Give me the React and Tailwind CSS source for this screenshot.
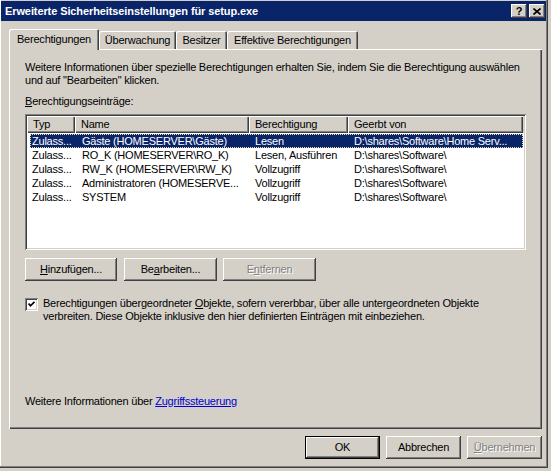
import React from "react";

const raised =
  "shadow-[inset_-1px_-1px_0_#404040,inset_1px_1px_0_#ffffff,inset_-2px_-2px_0_#808080]";
const sunken =
  "shadow-[inset_1px_1px_0_#808080,inset_-1px_-1px_0_#ffffff,inset_2px_2px_0_#404040,inset_-2px_-2px_0_#d4d0c8]";
const tabEdge =
  "shadow-[inset_1px_1px_0_#ffffff,inset_-1px_0_0_#404040,inset_-2px_0_0_#808080]";

const rows = [
  ["Zulass...", "Gäste (HOMESERVER\\Gäste)", "Lesen", "D:\\shares\\Software\\Home Serv..."],
  ["Zulass...", "RO_K (HOMESERVER\\RO_K)", "Lesen, Ausführen", "D:\\shares\\Software\\"],
  ["Zulass...", "RW_K (HOMESERVER\\RW_K)", "Vollzugriff", "D:\\shares\\Software\\"],
  ["Zulass...", "Administratoren (HOMESERVE...", "Vollzugriff", "D:\\shares\\Software\\"],
  ["Zulass...", "SYSTEM", "Vollzugriff", "D:\\shares\\Software\\"],
];

function Button({ children, className = "", disabled }) {
  return (
    <div
      className={`flex h-[23px] items-center justify-center bg-[#d4d0c8] ${raised} ${
        disabled ? "text-[#808080] [text-shadow:1px_1px_0_#ffffff]" : "text-black"
      } ${className}`}
    >
      {children}
    </div>
  );
}

function HeaderCell({ children, className = "" }) {
  return (
    <div
      className={`flex h-[17px] shrink-0 items-center pl-[6px] shadow-[inset_1px_1px_0_#ffffff,inset_-1px_-1px_0_#404040,inset_-2px_-2px_0_#808080] ${className}`}
    >
      {children}
    </div>
  );
}

export default function App() {
  return (
    <div className="h-[471px] w-[551px] overflow-hidden bg-[#d4d0c8] font-['Liberation_Sans',Arial,sans-serif] text-[11px] leading-[13px] tracking-[-0.22px] text-black">
      <div className="flex h-[468px] w-[548px] flex-col pl-[1px] pr-[2px] pt-[1px] shadow-[inset_-1px_-1px_0_#404040,inset_-2px_-2px_0_#808080,inset_1px_0_0_#ffffff]">
        {/* Title bar */}
        <div className="flex h-[20px] items-center justify-between bg-[#0a246a] pl-[4px] pr-[1px]">
          <span className="whitespace-nowrap font-bold tracking-[-0.1px] text-white">
            Erweiterte Sicherheitseinstellungen für setup.exe
          </span>
          <div className="flex gap-[2px]">
            <div className={`flex h-[14px] w-[16px] items-center justify-center bg-[#d4d0c8] ${raised}`}>
              <span className="text-[11px] font-bold leading-none text-black">?</span>
            </div>
            <div className={`flex h-[14px] w-[16px] items-center justify-center bg-[#d4d0c8] ${raised}`}>
              <svg width="8" height="7" viewBox="0 0 8 7">
                <path d="M0.5 0.5 L7.5 6.5 M7.5 0.5 L0.5 6.5" stroke="#000000" strokeWidth="1.6" />
              </svg>
            </div>
          </div>
        </div>

        {/* Tabs */}
        <div className="ml-[8px] mt-[8px] flex h-[20px] items-end">
          <div className={`relative z-10 -mb-px flex h-[21px] w-[90px] justify-center rounded-t-[2px] bg-[#d4d0c8] pt-[4px] ${tabEdge}`}>
            Berechtigungen
          </div>
          <div className={`flex h-[18px] w-[77px] justify-center rounded-t-[2px] pt-[3px] ${tabEdge}`}>
            Überwachung
          </div>
          <div className={`flex h-[18px] w-[51px] justify-center rounded-t-[2px] pt-[3px] ${tabEdge}`}>
            Besitzer
          </div>
          <div className={`flex h-[18px] w-[131px] justify-center rounded-t-[2px] pt-[3px] ${tabEdge}`}>
            Effektive Berechtigungen
          </div>
        </div>

        {/* Tab panel */}
        <div className="ml-[8px] flex h-[380px] w-[533px] flex-col pl-[16px] pt-[12px] pb-[21px] shadow-[inset_1px_1px_0_#ffffff,inset_-1px_-1px_0_#404040,inset_-2px_-2px_0_#808080]">
          <p className="whitespace-nowrap">
            Weitere Informationen über spezielle Berechtigungen erhalten Sie, indem Sie die Berechtigung auswählen
            <br />
            und auf "Bearbeiten" klicken.
          </p>
          <p className="mt-[8px]">
            <u>B</u>erechtigungseinträge:
          </p>

          {/* List view */}
          <div className={`mt-[6px] flex h-[136px] w-[501px] flex-col bg-white p-[2px] ${sunken}`}>
            <div className="flex bg-[#d4d0c8]">
              <HeaderCell className="w-[48px]">Typ</HeaderCell>
              <HeaderCell className="w-[174px]">Name</HeaderCell>
              <HeaderCell className="w-[99px]">Berechtigung</HeaderCell>
              <HeaderCell className="w-[175px]">Geerbt von</HeaderCell>
            </div>
            <div className="flex flex-col pl-[3px] pt-px">
              {rows.map((r, i) => (
                <div
                  key={i}
                  className={`flex h-[14px] w-[493px] items-center whitespace-nowrap ${
                    i === 0
                      ? "bg-[#0a246a] text-white outline-1 outline-dotted outline-[#e8e0a0] -outline-offset-1"
                      : ""
                  }`}
                >
                  <span className="w-[45px] shrink-0 pl-[2px]">{r[0]}</span>
                  <span className="w-[174px] shrink-0 pl-[7px]">{r[1]}</span>
                  <span className="w-[99px] shrink-0 pl-[6px]">{r[2]}</span>
                  <span className="w-[175px] shrink-0 pl-[6px]">{r[3]}</span>
                </div>
              ))}
            </div>
          </div>

          {/* Action buttons */}
          <div className="mt-[8px] flex">
            <Button className="w-[92px]">
              <span>
                <u>H</u>inzufügen...
              </span>
            </Button>
            <Button className="ml-[7px] w-[93px]">
              <span>
                Be<u>a</u>rbeiten...
              </span>
            </Button>
            <Button className="ml-[6px] w-[93px]" disabled>
              <span>
                E<u>n</u>tfernen
              </span>
            </Button>
          </div>

          {/* Inherit checkbox */}
          <div className="mt-[17px] flex items-start gap-[5px]">
            <div className={`flex h-[13px] w-[13px] shrink-0 items-center justify-center bg-white ${sunken}`}>
              <svg width="7" height="7" viewBox="0 0 7 7">
                <path d="M0.5 2.5 L2.5 4.8 L6.5 0.8" fill="none" stroke="#000000" strokeWidth="1.8" />
              </svg>
            </div>
            <p className="-mt-px whitespace-nowrap">
              Berechtigungen übergeordneter <u>O</u>bjekte, sofern vererbbar, über alle untergeordneten Objekte
              <br />
              verbreiten. Diese Objekte inklusive den hier definierten Einträgen mit einbeziehen.
            </p>
          </div>

          <p className="mt-auto whitespace-nowrap">
            Weitere Informationen über <span className="text-[#0000cc] underline">Zugriffssteuerung</span>
          </p>
        </div>

        {/* Dialog buttons */}
        <div className="ml-[8px] mt-[7px] flex w-[533px] justify-end gap-[6px]">
          <Button className="w-[75px] shadow-[inset_0_0_0_1px_#000000,inset_-2px_-2px_0_#404040,inset_2px_2px_0_#ffffff,inset_-3px_-3px_0_#808080]">
            OK
          </Button>
          <Button className="w-[75px]">Abbrechen</Button>
          <Button className="w-[75px]" disabled>
            <span>
              <u>Ü</u>bernehmen
            </span>
          </Button>
        </div>
      </div>
    </div>
  );
}
